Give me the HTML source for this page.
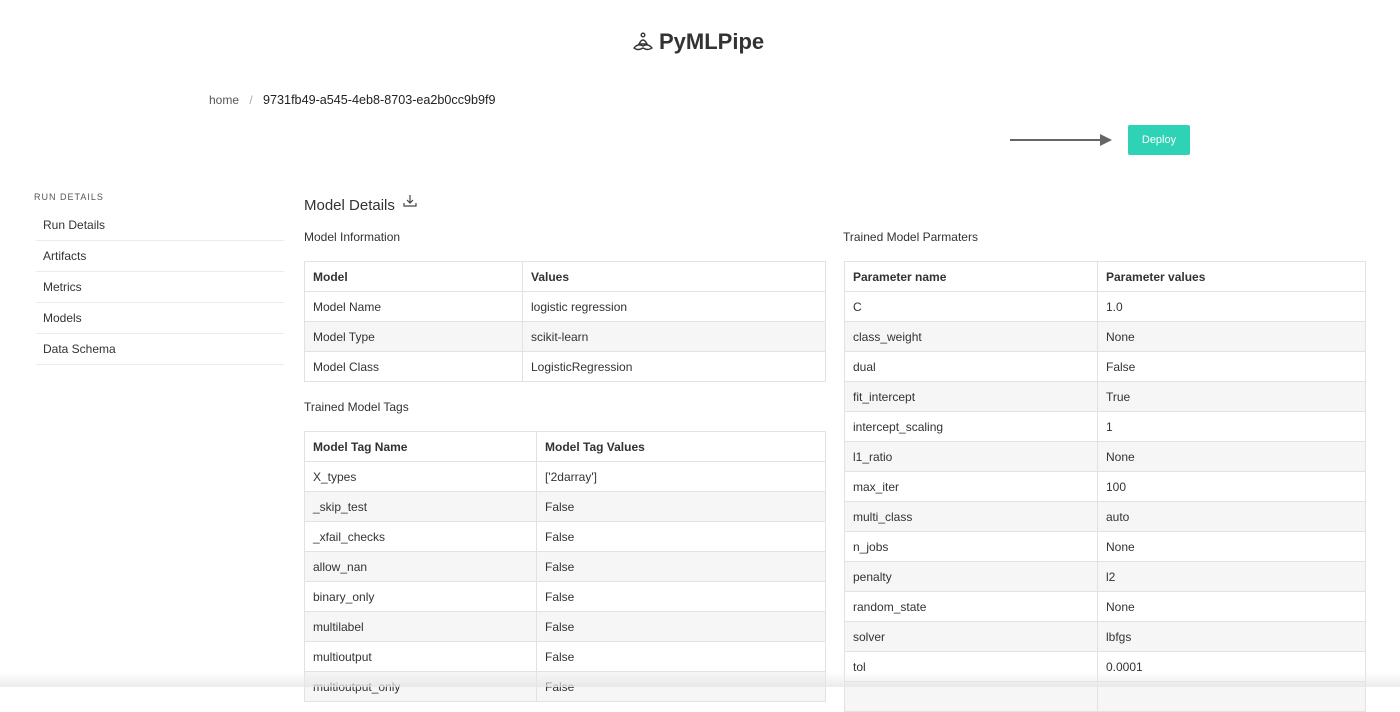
<!DOCTYPE html><html><head><style>
body{margin:0;width:1400px;height:687px;overflow:hidden;background:#fff;font-family:"Liberation Sans",sans-serif;color:#333;position:relative}
.a{position:absolute}
table{position:absolute;border-collapse:collapse;font-size:12px;color:#333}
td,th{border:1px solid #e2e2e2;height:29px;padding:0 8px;text-align:left}
th{font-weight:bold;color:#333}
tr.g td{background:#f6f6f6}
.side{position:absolute;left:36px;width:248px;font-size:12px}
.side div{height:30px;line-height:30px;border-bottom:1px solid #ebebeb;padding-left:7px}
</style></head><body>
<div class="a" style="left:632px;top:29px;font-size:22px;font-weight:bold;color:#333;display:flex;align-items:center">
<svg width="22" height="20" viewBox="0 0 22 20" style="margin-right:5px"><g fill="none" stroke="#333" stroke-width="1.4"><circle cx="11" cy="3" r="1.8"/><path d="M7 12 Q11 4 15 12 Z"/><path d="M2 16 Q6 11 11 14 Q16 11 20 16 Q16 19 11 16 Q6 19 2 16Z"/></g></svg>PyMLPipe</div>
<div class="a" style="left:209px;top:93px;font-size:12px;color:#555">home <span style="color:#aaa;margin:0 7px">/</span> <span style="color:#222;font-size:12.6px">9731fb49-a545-4eb8-8703-ea2b0cc9b9f9</span></div>
<div class="a" style="left:1010px;top:139px;width:94px;height:2px;background:#666"></div>
<div class="a" style="left:1100px;top:134px;width:0;height:0;border-left:12px solid #666;border-top:6px solid transparent;border-bottom:6px solid transparent"></div>
<div class="a" style="left:1128px;top:125px;width:62px;height:30px;background:#2ed3b5;color:#fff;font-size:11px;line-height:30px;text-align:center;border-radius:2px">Deploy</div>
<div class="a" style="left:34px;top:192px;font-size:9px;letter-spacing:1px;color:#555">RUN DETAILS</div>
<div class="side" style="top:210px"><div>Run Details</div><div>Artifacts</div><div>Metrics</div><div>Models</div><div>Data Schema</div></div>
<div class="a" style="left:304px;top:194px;font-size:15px;color:#333">Model Details <svg width="14" height="14" viewBox="0 0 14 14" style="margin-left:4px;vertical-align:2px"><path d="M7 1v8M4 6l3 3 3-3M1 9v3h12V9" fill="none" stroke="#444" stroke-width="1.2"/></svg></div>
<div class="a" style="left:304px;top:230px;font-size:12px">Model Information</div>
<div class="a" style="left:843px;top:230px;font-size:12px">Trained Model Parmaters</div>
<div class="a" style="left:304px;top:400px;font-size:12px">Trained Model Tags</div>
<table style="left:304px;top:261px;width:522px"><tr><th style="width:201px">Model</th><th>Values</th></tr>
<tr><td>Model Name</td><td>logistic regression</td></tr><tr class="g"><td>Model Type</td><td>scikit-learn</td></tr><tr><td>Model Class</td><td>LogisticRegression</td></tr></table>
<table style="left:304px;top:431px;width:522px"><tr><th style="width:215px">Model Tag Name</th><th>Model Tag Values</th></tr>
<tr><td>X_types</td><td>['2darray']</td></tr><tr class="g"><td>_skip_test</td><td>False</td></tr><tr><td>_xfail_checks</td><td>False</td></tr><tr class="g"><td>allow_nan</td><td>False</td></tr><tr><td>binary_only</td><td>False</td></tr><tr class="g"><td>multilabel</td><td>False</td></tr><tr><td>multioutput</td><td>False</td></tr><tr class="g"><td>multioutput_only</td><td>False</td></tr></table>
<table style="left:844px;top:261px;width:522px"><tr><th style="width:236px">Parameter name</th><th>Parameter values</th></tr>
<tr><td>C</td><td>1.0</td></tr><tr class="g"><td>class_weight</td><td>None</td></tr><tr><td>dual</td><td>False</td></tr><tr class="g"><td>fit_intercept</td><td>True</td></tr><tr><td>intercept_scaling</td><td>1</td></tr><tr class="g"><td>l1_ratio</td><td>None</td></tr><tr><td>max_iter</td><td>100</td></tr><tr class="g"><td>multi_class</td><td>auto</td></tr><tr><td>n_jobs</td><td>None</td></tr><tr class="g"><td>penalty</td><td>l2</td></tr><tr><td>random_state</td><td>None</td></tr><tr class="g"><td>solver</td><td>lbfgs</td></tr><tr><td>tol</td><td>0.0001</td></tr><tr class="g"><td>&nbsp;</td><td></td></tr></table>
<div class="a" style="left:0;top:672px;width:1400px;height:15px;background:linear-gradient(#fff0,#e6e6e6cc)"></div>
</body></html>
